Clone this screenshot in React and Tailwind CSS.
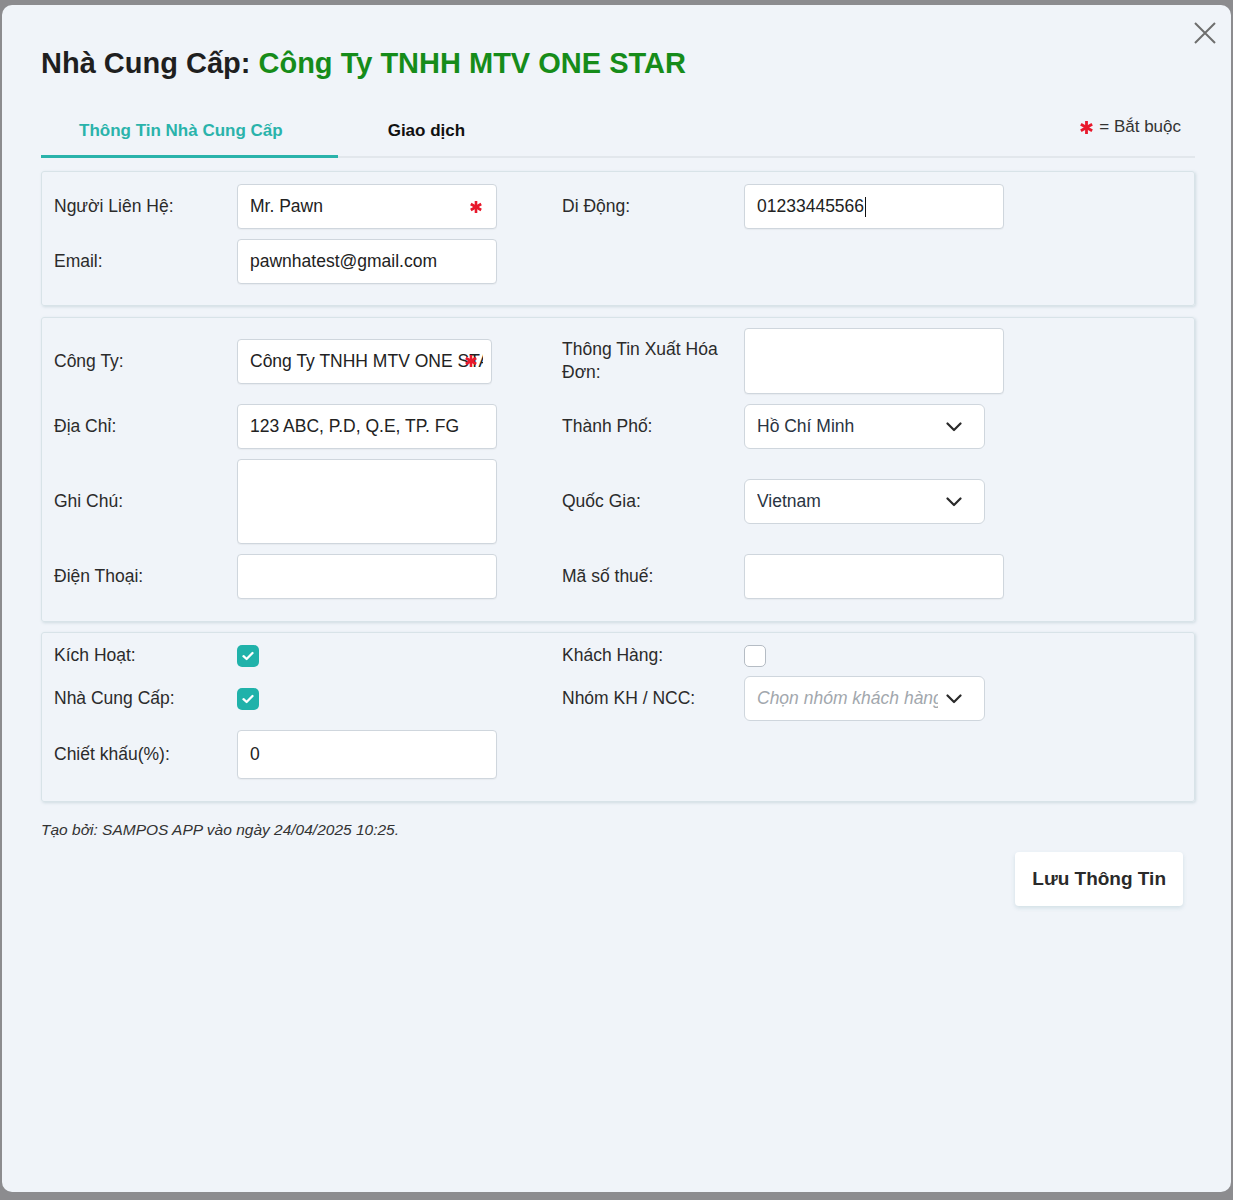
import React from "react";

const Star = ({ className = "" }) => (
	<svg viewBox="0 0 12 12" className={"w-[12px] h-[12px] " + className}>
		<g stroke="#e8192c" strokeWidth="2.6" strokeLinecap="butt">
			<line x1="6" y1="0" x2="6" y2="12" />
			<line x1="0.8" y1="3" x2="11.2" y2="9" />
			<line x1="0.8" y1="9" x2="11.2" y2="3" />
		</g>
	</svg>
);

const Chevron = () => (
	<svg viewBox="0 0 16 10" className="w-[16px] h-[10px] flex-none">
		<path d="M1.5 1.5 L8 8 L14.5 1.5" fill="none" stroke="#2a2a2a" strokeWidth="2.2" strokeLinecap="round" strokeLinejoin="round" />
	</svg>
);

const Label = ({ children }) => (
	<div className="text-[17.5px] leading-[23px] text-[#2b2b2b] pr-[12px]">{children}</div>
);

const Field = ({ value = "", star, caret, w = "w-[260px]", h = "h-[45px]", pr = "pr-[12px]" }) => (
	<div className={`relative ${w} ${h} ${pr} flex items-center bg-white border border-[#cfd6dd] rounded-[4px] pl-[12px] text-[17.5px] text-[#222] whitespace-nowrap shadow-[0_1px_1px_rgba(0,0,0,0.04)]`}>
		<span className="overflow-hidden">{value}</span>
		{caret && <span className="inline-block w-px h-[20px] bg-[#111] ml-px" />}
		{star && <Star className="absolute right-[14px] top-1/2 -translate-y-1/2" />}
	</div>
);

const Select = ({ value, placeholder }) => (
	<div className="w-[241px] h-[45px] flex items-center gap-[8px] bg-white border border-[#cfd6dd] rounded-[6px] pl-[12px] pr-[22px] text-[17.5px] overflow-hidden whitespace-nowrap">
		{value ? (
			<span className="flex-1 overflow-hidden text-[#2a3442]">{value}</span>
		) : (
			<span className="flex-1 overflow-hidden italic text-[#a2a7ad]">{placeholder}</span>
		)}
		<Chevron />
	</div>
);

const Check = ({ on }) =>
	on ? (
		<div className="w-[22px] h-[22px] rounded-[5px] bg-[#20b2aa] flex items-center justify-center">
			<svg viewBox="0 0 12 10" className="w-[12px] h-[10px]">
				<path d="M1.5 5.2 L4.6 8 L10.5 2" fill="none" stroke="white" strokeWidth="2.3" strokeLinecap="round" strokeLinejoin="round" />
			</svg>
		</div>
	) : (
		<div className="w-[22px] h-[22px] rounded-[5px] bg-white border border-[#b5bcc4]" />
	);

const Section = ({ className = "", children }) => (
	<div className={`grid grid-cols-[183px_325px_182px_1fr] items-center pl-[12px] border border-[#d8e3e8] rounded-[3px] shadow-[1px_1px_3px_rgba(60,110,120,0.18)] ${className}`}>
		{children}
	</div>
);

export default function App() {
	return (
		<div className="min-h-screen bg-[#8c8c8f] pt-[5px] px-[2px] font-['Liberation_Sans',Arial,sans-serif]">
			<div className="relative h-[1187px] bg-[#f0f4f9] rounded-[10px] pl-[39px] pr-[36px] pt-[40px]">
				<button className="absolute right-[15px] top-[17px] w-[22px] h-[22px]">
					<svg viewBox="0 0 22 22" className="w-[22px] h-[22px]">
						<path d="M1 1 L21 21 M21 1 L1 21" stroke="#6e6e6e" strokeWidth="2" />
					</svg>
				</button>

				<h1 className="text-[29px] leading-[36px] font-bold text-[#1f1f1f] whitespace-nowrap">
					Nhà Cung Cấp: <span className="text-[#168c1a]">Công Ty TNHH MTV ONE STAR</span>
				</h1>

				{/* Tabs */}
				<div className="mt-[34px] flex items-start justify-between border-b-2 border-[#e2e7ec]">
					<div className="flex">
						<div className="pl-[38px] pr-[55px] pt-[4px] pb-[12px] -mb-[2px] border-b-[3px] border-[#2ab3ab] text-[17px] leading-[24px] font-bold text-[#2ab3ab]">
							Thông Tin Nhà Cung Cấp
						</div>
						<div className="pl-[50px] pt-[4px] pb-[12px] text-[17px] leading-[24px] font-bold text-[#111]">Giao dịch</div>
					</div>
					<div className="flex items-center gap-[6px] pr-[14px] text-[17px] leading-[24px] text-[#333]">
						<Star className="w-[13px] h-[13px]" />
						<span>= Bắt buộc</span>
					</div>
				</div>

				{/* Contact */}
				<Section className="mt-[13px] pt-[12px] pb-[21px] gap-y-[10px]">
					<Label>Người Liên Hệ:</Label>
					<Field value="Mr. Pawn" star />
					<Label>Di Động:</Label>
					<Field value="01233445566" caret />
					<Label>Email:</Label>
					<Field value="pawnhatest@gmail.com" />
					<div />
					<div />
				</Section>

				{/* Company */}
				<Section className="mt-[11px] pt-[10px] pb-[22px] gap-y-[10px]">
					<Label>Công Ty:</Label>
					<Field value="Công Ty TNHH MTV ONE STAR" star w="w-[255px]" pr="pr-[8px]" />
					<Label>Thông Tin Xuất Hóa Đơn:</Label>
					<Field h="h-[66px]" />

					<Label>Địa Chỉ:</Label>
					<Field value="123 ABC, P.D, Q.E, TP. FG" />
					<Label>Thành Phố:</Label>
					<Select value="Hồ Chí Minh" />

					<Label>Ghi Chú:</Label>
					<Field h="h-[85px]" />
					<Label>Quốc Gia:</Label>
					<Select value="Vietnam" />

					<Label>Điện Thoại:</Label>
					<Field />
					<Label>Mã số thuế:</Label>
					<Field />
				</Section>

				{/* Flags */}
				<Section className="mt-[10px] pt-[11px] pb-[22px] gap-y-[9px]">
					<Label>Kích Hoạt:</Label>
					<Check on />
					<Label>Khách Hàng:</Label>
					<Check />

					<Label>Nhà Cung Cấp:</Label>
					<Check on />
					<Label>Nhóm KH / NCC:</Label>
					<Select placeholder="Chọn nhóm khách hàng" />

					<Label>Chiết khấu(%):</Label>
					<Field value="0" h="h-[49px]" />
					<div />
					<div />
				</Section>

				<p className="mt-[18px] text-[15.5px] leading-[20px] italic text-[#333]">
					Tạo bởi: SAMPOS APP vào ngày 24/04/2025 10:25.
				</p>

				<div className="flex justify-end pr-[12px] mt-[12px]">
					<button className="bg-white rounded-[4px] px-[17px] py-[15px] text-[19px] leading-[24px] font-bold text-[#2a2a2a] shadow-[0_2px_4px_rgba(40,110,120,0.15)]">
						Lưu Thông Tin
					</button>
				</div>
			</div>
		</div>
	);
}
